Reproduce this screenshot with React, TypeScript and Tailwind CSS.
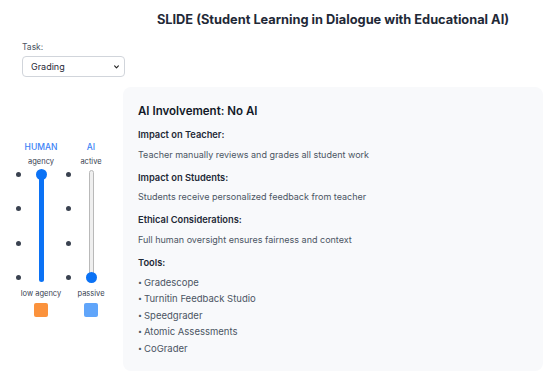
import React from "react";

function Dots() {
  return (
    <div className="flex h-[114px] w-[10px] flex-col items-center justify-between py-[2.5px]">
      <span className="block h-[5px] w-[5px] rounded-full bg-[#3a4250]" />
      <span className="block h-[5px] w-[5px] rounded-full bg-[#3a4250]" />
      <span className="block h-[5px] w-[5px] rounded-full bg-[#3a4250]" />
      <span className="block h-[5px] w-[5px] rounded-full bg-[#3a4250]" />
    </div>
  );
}

function Unit({
  title,
  top,
  bottom,
  filled,
  thumbTop,
  swatch,
}: {
  title: string;
  top: string;
  bottom: string;
  filled: boolean;
  thumbTop: boolean;
  swatch: string;
}) {
  return (
    <div className="flex w-[50px] flex-row">
      <div className="flex w-[10px] flex-col pt-[28px]">
        <Dots />
      </div>
      <div className="flex w-[36px] flex-col items-center">
        <div className="h-[12px] text-[8.5px] leading-[12px] font-medium text-[#3b82f6]">{title}</div>
        <div className="mt-[4px] h-[10px] text-[7.5px] leading-[10px] text-[#374151]">{top}</div>
        <div className="relative mt-[2px] h-[114px] w-[12px]">
          {filled ? (
            <div className="absolute left-[3.5px] top-[3px] bottom-[1px] w-[5px] rounded-full bg-[#0b72f5]" />
          ) : (
            <div className="absolute left-[3.5px] top-[1px] bottom-[2px] w-[5px] rounded-full border border-[#b9b9b9] bg-[#efefef]" />
          )}
          {thumbTop ? (
            <div className="absolute left-[0.5px] top-0 h-[11px] w-[11px] rounded-full bg-[#0b72f5]" />
          ) : (
            <div className="absolute left-[0.5px] bottom-[0px] h-[11px] w-[11px] rounded-full bg-[#0b72f5]" />
          )}
        </div>
        <div className="mt-[6px] h-[10px] whitespace-nowrap text-[7.5px] leading-[10px] text-[#374151]">{bottom}</div>
        <div className={`mt-[4px] h-[14px] w-[14px] rounded-[2px] ${swatch}`} />
      </div>
    </div>
  );
}

export default function App() {
  const tools = ["Gradescope", "Turnitin Feedback Studio", "Speedgrader", "Atomic Assessments", "CoGrader"];
  return (
    <div className="h-[386px] w-[553px] overflow-hidden bg-white font-['Inter',sans-serif] text-[#1f2937]">
      <div className="ml-[123px] w-[420px] pt-[10px] text-center text-[12.8px] leading-[20px] font-bold text-[#1f2937]">
        SLIDE (Student Learning in Dialogue with Educational AI)
      </div>
      <div className="ml-[22px] mt-[11px] flex flex-col">
        <div className="text-[8.5px] leading-[12px] text-[#4b5563]">Task:</div>
        <div className="relative mt-[3px] h-[21px] w-[103px]">
          <select
            defaultValue="Grading"
            className="block h-[21px] w-[103px] appearance-none rounded-[4px] border border-[#d1d5db] bg-white pl-[8px] text-[9px] text-[#1f2937] outline-none"
          >
            <option>Grading</option>
            <option>Feedback</option>
            <option>Tutoring</option>
          </select>
          <svg
            className="pointer-events-none absolute right-[6px] top-[8.5px]"
            width="5"
            height="4"
            viewBox="0 0 5 4"
            fill="none"
          >
            <path d="M0.6 0.8 L2.5 2.9 L4.4 0.8" stroke="#222" strokeWidth="1.1" strokeLinecap="round" strokeLinejoin="round" />
          </svg>
        </div>
      </div>
      <div className="mt-[10px] flex flex-row">
        <div className="flex w-[123px] items-center pl-[13px]">
          <Unit title="HUMAN" top="agency" bottom="low agency" filled thumbTop swatch="bg-[#fb923c]" />
          <Unit title="AI" top="active" bottom="passive" filled={false} thumbTop={false} swatch="bg-[#60a5fa]" />
        </div>
        <div className="h-[284px] w-[420px] rounded-[8px] bg-[#f8f9fb] px-[15px] pt-[15.5px]">
          <div className="text-[11.5px] leading-[16px] font-semibold text-[#111827]">AI Involvement: No AI</div>
          <div className="mt-[9.5px] text-[9.3px] leading-[14px] font-semibold text-[#1f2937]">Impact on Teacher:</div>
          <div className="mt-[6px] text-[9px] leading-[14px] text-[#4b5563]">Teacher manually reviews and grades all student work</div>
          <div className="mt-[9px] text-[9.3px] leading-[14px] font-semibold text-[#1f2937]">Impact on Students:</div>
          <div className="mt-[5px] text-[9px] leading-[14px] text-[#4b5563]">Students receive personalized feedback from teacher</div>
          <div className="mt-[9px] text-[9.3px] leading-[14px] font-semibold text-[#1f2937]">Ethical Considerations:</div>
          <div className="mt-[6px] text-[9px] leading-[14px] text-[#4b5563]">Full human oversight ensures fairness and context</div>
          <div className="mt-[9px] text-[9.3px] leading-[14px] font-semibold text-[#1f2937]">Tools:</div>
          <ul className="mt-[4.5px]">
            {tools.map((t) => (
              <li key={t} className="flex text-[9.5px] leading-[16.5px] text-[#4b5563]">
                <span className="w-[6px] text-[7px]">•</span>
                <span>{t}</span>
              </li>
            ))}
          </ul>
        </div>
      </div>
    </div>
  );
}
